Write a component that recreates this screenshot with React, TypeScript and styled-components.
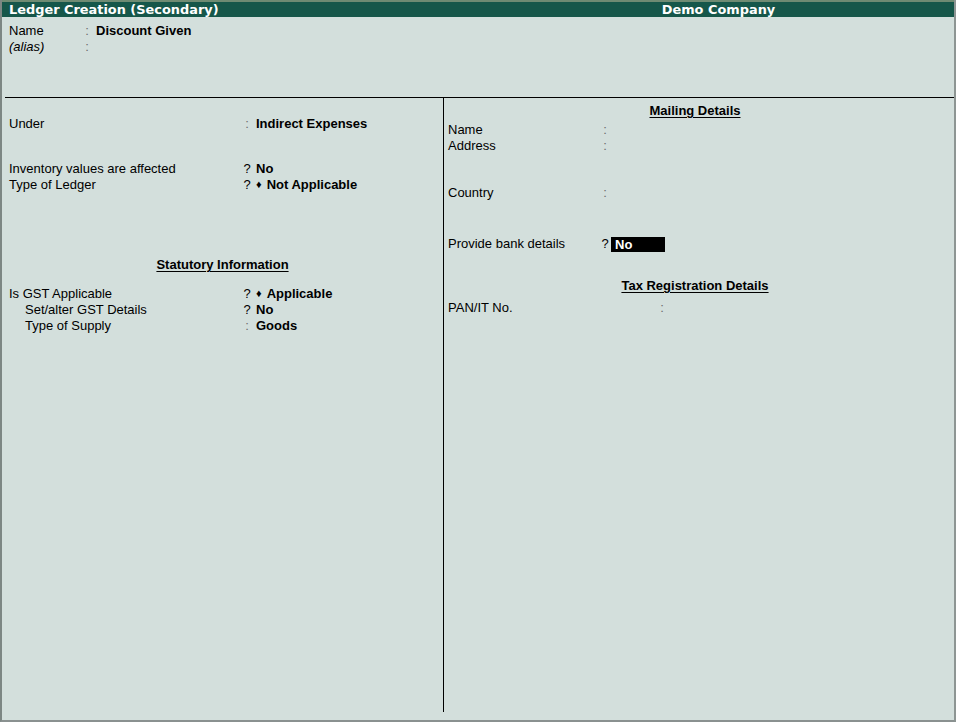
import React from "react";
import styled, { createGlobalStyle } from "styled-components";

const Global = createGlobalStyle`
  html, body { margin: 0; padding: 0; background: #d3dfdc; }
  * { box-sizing: border-box; }
`;

const Screen = styled.div`
  width: 956px;
  height: 722px;
  background: #d3dfdc;
  border-left: 2px solid #7d8784;
  border-right: 2px solid #8d9593;
  border-bottom: 2px solid #8a9190;
  display: flex;
  flex-direction: column;
  font-family: "Liberation Sans", Arial, sans-serif;
  font-size: 13px;
  color: #000;
  overflow: hidden;
`;

const TopStrip = styled.div`
  height: 2px;
  background: #6f8b73;
  flex: none;
`;

const TitleBar = styled.div`
  height: 15px;
  flex: none;
  background: #16574a;
  color: #fff;
  display: grid;
  grid-template-columns: 481px 1fr;
  align-items: center;
  font-family: "DejaVu Sans", Tahoma, sans-serif;
  font-weight: bold;
  font-size: 12.9px;
  line-height: 15px;
`;

const TitleLeft = styled.div`
  padding-left: 7px;
  white-space: nowrap;
`;

const TitleRight = styled.div`
  text-align: center;
  white-space: nowrap;
`;

const Header = styled.div`
  height: 81px;
  flex: none;
  padding: 6px 0 0 4px;
  border-bottom: 1px solid #000;
  margin-left: 3px;
`;

const FieldGrid = styled.div<{ $label: number }>`
  display: grid;
  grid-template-columns: ${(p) => p.$label}px 12px auto;
  column-gap: 3px;
  align-items: center;
`;

const Label = styled.div<{ $indent?: boolean; $italic?: boolean }>`
  line-height: 16px;
  height: 16px;
  white-space: nowrap;
  padding-left: ${(p) => (p.$indent ? 16 : 0)}px;
  font-style: ${(p) => (p.$italic ? "italic" : "normal")};
`;

const Sym = styled.div<{ $faint?: boolean }>`
  line-height: 16px;
  height: 16px;
  text-align: center;
  color: ${(p) => (p.$faint ? "#6c6c6c" : "#000")};
`;

const Value = styled.div`
  line-height: 16px;
  height: 16px;
  font-weight: bold;
  white-space: nowrap;
`;

const Diamond = styled.span`
  font-size: 11px;
  margin-right: 5px;
  position: relative;
  top: -1px;
`;

const Highlight = styled.div`
  background: #000;
  color: #fff;
  font-weight: bold;
  width: 54px;
  height: 15px;
  line-height: 15px;
  padding-left: 4px;
  margin-left: -3px;
`;

const Body = styled.div`
  flex: 1;
  display: grid;
  grid-template-columns: 442px 1fr;
  padding-bottom: 8px;
`;

const LeftPane = styled.div`
  border-right: 1px solid #000;
  padding: 18px 0 0 7px;
  display: flex;
  flex-direction: column;
`;

const RightPane = styled.div`
  padding: 5px 0 0 4px;
  display: flex;
  flex-direction: column;
`;

const Heading = styled.div<{ $shift?: number }>`
  text-align: center;
  font-weight: bold;
  line-height: 16px;
  height: 16px;
  padding-right: ${(p) => p.$shift ?? 0}px;
  span {
    text-decoration: underline;
    text-underline-offset: 2px;
  }
`;

const Spacer = styled.div<{ $h: number }>`
  height: ${(p) => p.$h}px;
  flex: none;
`;

export default function App() {
  return (
    <>
      <Global />
      <Screen>
        <TopStrip />
        <TitleBar>
          <TitleLeft>Ledger Creation (Secondary)</TitleLeft>
          <TitleRight>Demo Company</TitleRight>
        </TitleBar>
        <Header>
          <FieldGrid $label={69}>
            <Label>Name</Label>
            <Sym $faint>:</Sym>
            <Value>Discount Given</Value>
            <Label $italic>(alias)</Label>
            <Sym $faint>:</Sym>
            <Value />
          </FieldGrid>
        </Header>
        <Body>
          <LeftPane>
            <FieldGrid $label={229}>
              <Label>Under</Label>
              <Sym $faint>:</Sym>
              <Value>Indirect Expenses</Value>
            </FieldGrid>
            <Spacer $h={29} />
            <FieldGrid $label={229}>
              <Label>Inventory values are affected</Label>
              <Sym>?</Sym>
              <Value>No</Value>
              <Label>Type of Ledger</Label>
              <Sym>?</Sym>
              <Value>
                <Diamond>♦</Diamond>Not Applicable
              </Value>
            </FieldGrid>
            <Spacer $h={64} />
            <Heading $shift={7}>
              <span>Statutory Information</span>
            </Heading>
            <Spacer $h={13} />
            <FieldGrid $label={229}>
              <Label>Is GST Applicable</Label>
              <Sym>?</Sym>
              <Value>
                <Diamond>♦</Diamond>Applicable
              </Value>
              <Label $indent>Set/alter GST Details</Label>
              <Sym>?</Sym>
              <Value>No</Value>
              <Label $indent>Type of Supply</Label>
              <Sym $faint>:</Sym>
              <Value>Goods</Value>
            </FieldGrid>
          </LeftPane>
          <RightPane>
            <Heading $shift={12}>
              <span>Mailing Details</span>
            </Heading>
            <Spacer $h={3} />
            <FieldGrid $label={148}>
              <Label>Name</Label>
              <Sym $faint>:</Sym>
              <Value />
              <Label>Address</Label>
              <Sym $faint>:</Sym>
              <Value />
            </FieldGrid>
            <Spacer $h={31} />
            <FieldGrid $label={148}>
              <Label>Country</Label>
              <Sym $faint>:</Sym>
              <Value />
            </FieldGrid>
            <Spacer $h={35} />
            <FieldGrid $label={148}>
              <Label>Provide bank details</Label>
              <Sym>?</Sym>
              <Highlight>No</Highlight>
            </FieldGrid>
            <Spacer $h={26} />
            <Heading $shift={12}>
              <span>Tax Registration Details</span>
            </Heading>
            <Spacer $h={6} />
            <FieldGrid $label={205}>
              <Label>PAN/IT No.</Label>
              <Sym $faint>:</Sym>
              <Value />
            </FieldGrid>
          </RightPane>
        </Body>
      </Screen>
    </>
  );
}
